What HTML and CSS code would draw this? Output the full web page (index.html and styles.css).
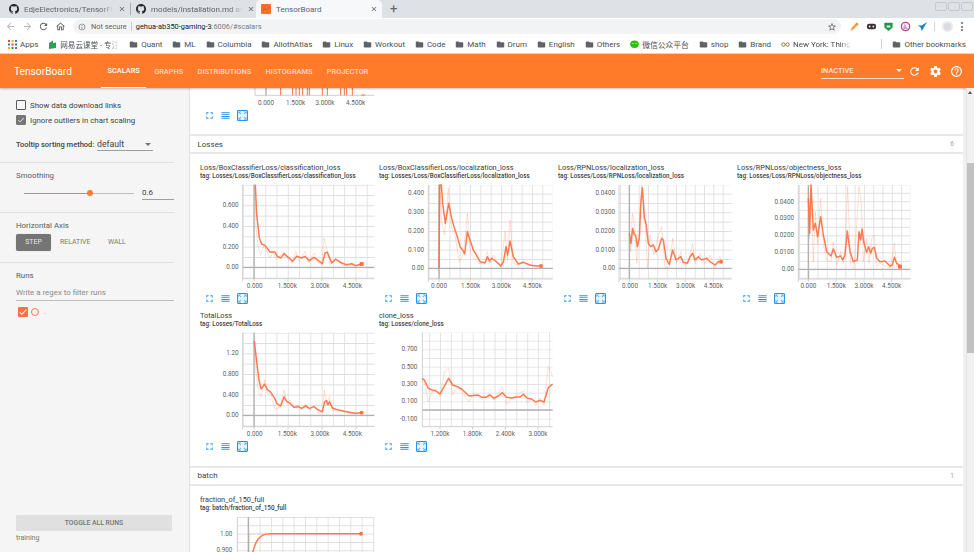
FILE: index.html
```html
<!DOCTYPE html>
<html lang="en">
<head>
  <title>TensorBoard</title>
  <link rel="stylesheet" href="styles.css">
</head>
<body>

<!-- icon sheet -->
<svg class="defs">
  <symbol id="i-github" viewBox="0 0 16 16"><path d="M8 0C3.58 0 0 3.58 0 8c0 3.54 2.29 6.53 5.47 7.59.4.07.55-.17.55-.38 0-.19-.01-.82-.01-1.49-2.01.37-2.53-.49-2.69-.94-.09-.23-.48-.94-.82-1.13-.28-.15-.68-.52-.01-.53.63-.01 1.08.58 1.23.82.72 1.21 1.87.87 2.33.66.07-.52.28-.87.51-1.07-1.78-.2-3.64-.89-3.64-3.95 0-.87.31-1.59.82-2.15-.08-.2-.36-1.02.08-2.12 0 0 .67-.21 2.2.82.64-.18 1.32-.27 2-.27.68 0 1.36.09 2 .27 1.53-1.04 2.2-.82 2.2-.82.44 1.1.16 1.92.08 2.12.51.56.82 1.27.82 2.15 0 3.07-1.87 3.75-3.65 3.95.29.25.54.73.54 1.48 0 1.07-.01 1.93-.01 2.2 0 .21.15.46.55.38A8.013 8.013 0 0016 8c0-4.42-3.58-8-8-8z"/></symbol>
  <symbol id="i-close" viewBox="0 0 24 24"><path d="M19 6.41L17.59 5 12 10.59 6.41 5 5 6.41 10.59 12 5 17.59 6.41 19 12 13.41 17.59 19 19 17.59 13.41 12z"/></symbol>
  <symbol id="i-folder" viewBox="0 0 24 24"><path d="M10 4H4c-1.1 0-2 .9-2 2v12c0 1.1.9 2 2 2h16c1.1 0 2-.9 2-2V8c0-1.1-.9-2-2-2h-8l-2-2z"/></symbol>
  <symbol id="i-full" viewBox="0 0 24 24"><path d="M7 14H5v5h5v-2H7v-3zm-2-4h2V7h3V5H5v5zm12 7h-3v2h5v-5h-2v3zM14 5v2h3v3h2V5h-5z"/></symbol>
  <symbol id="i-list" viewBox="0 0 24 24"><path d="M3 15h18v-2H3v2zm0 4h18v-2H3v2zm0-8h18V9H3v2zm0-6v2h18V5H3z"/></symbol>
  <symbol id="i-fit" viewBox="0 0 24 24"><path d="M15 3l2.3 2.3-2.89 2.87 1.42 1.42L18.7 6.7 21 9V3zM3 9l2.3-2.3 2.87 2.89 1.42-1.42L6.7 5.3 9 3H3zm6 12l-2.3-2.3 2.89-2.87-1.42-1.42L5.3 17.3 3 15v6zm12-6l-2.3 2.3-2.87-2.89-1.42 1.42 2.89 2.87L15 21h6z"/></symbol>
</svg>

<!-- browser window -->
<div class="tabstrip">
  <div class="tab">
    <svg class="tab-icon"><use href="#i-github"/></svg>
    <span class="tab-title">EdjeElectronics/TensorFl</span>
    <svg class="tab-close"><use href="#i-close"/></svg>
  </div>
  <div class="tab tab-split">
    <svg class="tab-icon"><use href="#i-github"/></svg>
    <span class="tab-title">models/installation.md at</span>
    <svg class="tab-close"><use href="#i-close"/></svg>
  </div>
  <div class="tab tab-active">
    <svg class="tab-icon" viewBox="0 0 10 10"><rect width="10" height="10" rx="1" fill="#ff6d2e"/><path d="M1.5 7L4 4.5 5.5 6 8.5 3" fill="none" stroke="#d9531e" stroke-width="1"/></svg>
    <span class="tab-title tab-title-full">TensorBoard</span>
    <svg class="tab-close"><use href="#i-close"/></svg>
  </div>
  <div class="new-tab">+</div>
  <div class="window-btns">
    <span class="window-btn"></span><span class="window-btn"></span><span class="window-btn"></span>
  </div>
</div>

<div class="toolbar">
  <svg class="nav-icon faint" viewBox="0 0 24 24"><path d="M20 11H7.83l5.59-5.59L12 4l-8 8 8 8 1.41-1.41L7.83 13H20v-2z"/></svg>
  <svg class="nav-icon faint" viewBox="0 0 24 24"><path d="M12 4l-1.41 1.41L16.17 11H4v2h12.17l-5.58 5.59L12 20l8-8z"/></svg>
  <svg class="nav-icon" viewBox="0 0 24 24"><path d="M17.65 6.35C16.2 4.9 14.21 4 12 4c-4.42 0-7.99 3.58-7.99 8s3.57 8 7.99 8c3.73 0 6.84-2.55 7.73-6h-2.08c-.82 2.33-3.04 4-5.65 4-3.31 0-6-2.69-6-6s2.69-6 6-6c1.66 0 3.14.69 4.22 1.78L13 11h7V4l-2.35 2.35z"/></svg>
  <svg class="nav-icon" viewBox="0 0 24 24"><path d="M12 5.69l5 4.5V18h-2v-6H9v6H7v-7.81l5-4.5M12 3L2 12h3v8h6v-6h2v6h6v-8h3L12 3z"/></svg>
  <div class="omnibox">
    <svg class="omni-info" viewBox="0 0 24 24"><path d="M11 7h2v2h-2zm0 4h2v6h-2zm1-9C6.48 2 2 6.48 2 12s4.48 10 10 10 10-4.48 10-10S17.52 2 12 2zm0 18c-4.41 0-8-3.59-8-8s3.59-8 8-8 8 3.59 8 8-3.59 8-8 8z"/></svg>
    <span class="not-secure">Not secure</span>
    <span class="omni-split"></span>
    <span class="url"><b>gehua-ab350-gaming-3</b>:6006/#scalars</span>
    <svg class="omni-star" viewBox="0 0 24 24"><path d="M22 9.24l-7.19-.62L12 2 9.19 8.63 2 9.24l5.46 4.73L5.82 21 12 17.27 18.18 21l-1.63-7.03L22 9.24zM12 15.4l-3.76 2.27 1-4.28-3.32-2.88 4.38-.38L12 6.1l1.71 4.04 4.38.38-3.32 2.88 1 4.28L12 15.4z"/></svg>
  </div>
  <div class="extensions">
    <svg class="ext" viewBox="0 0 12 12"><path d="M1.5 10.5L3 7l5-5 2 2-5 5z" fill="#f6a04d"/><path d="M8 2l2 2" stroke="#e8813a" stroke-width="1.4"/></svg>
    <svg class="ext" viewBox="0 0 12 12"><rect x="1" y="3" width="10" height="6" rx="2.5" fill="#3a2f35"/><circle cx="4" cy="6" r="1" fill="#eee"/><circle cx="8" cy="6" r="1" fill="#eee"/></svg>
    <svg class="ext" viewBox="0 0 12 12"><path d="M1.5 2h9v5L6 11 1.5 7z" fill="#1c9a4b"/><path d="M4 5h4v2H4z" fill="#fff"/></svg>
    <svg class="ext" viewBox="0 0 12 12"><circle cx="6" cy="6" r="4.5" fill="none" stroke="#b64a82" stroke-width="1.5"/><path d="M5 3l4 6H3z" fill="#c2a4d6"/></svg>
    <svg class="ext" viewBox="0 0 12 12"><path d="M11 1L5 5 1 5l3 2 1 4 2-3z" fill="#1f7fc4"/></svg>
    <span class="toolbar-split"></span>
    <span class="avatar"></span>
    <span class="dots"><i></i><i></i><i></i></span>
  </div>
</div>

<div class="bookmarks">
  <span class="mark mark-apps"><svg class="mark-icon" viewBox="0 0 9 9"><rect width="2" height="2" fill="#e8453c"/><rect x="3.5" width="2" height="2" fill="#f4b400"/><rect x="7" width="2" height="2" fill="#3b78e7"/><rect y="3.5" width="2" height="2" fill="#3b78e7"/><rect x="3.5" y="3.5" width="2" height="2" fill="#e8453c"/><rect x="7" y="3.5" width="2" height="2" fill="#0f9d58"/><rect y="7" width="2" height="2" fill="#f4b400"/><rect x="3.5" y="7" width="2" height="2" fill="#0f9d58"/><rect x="7" y="7" width="2" height="2" fill="#e8453c"/></svg>Apps</span>
  <span class="mark mark-fade mark-cjk"><svg class="mark-icon" viewBox="0 0 9 9"><path d="M1 3l4-2.5V3l3-.5V8L1 9z" fill="#2f9e58"/></svg>网易云课堂 - 专注</span>
  <span class="mark"><svg class="mark-icon folder"><use href="#i-folder"/></svg>Quant</span>
  <span class="mark"><svg class="mark-icon folder"><use href="#i-folder"/></svg>ML</span>
  <span class="mark"><svg class="mark-icon folder"><use href="#i-folder"/></svg>Columbia</span>
  <span class="mark"><svg class="mark-icon folder"><use href="#i-folder"/></svg>AliothAtlas</span>
  <span class="mark"><svg class="mark-icon folder"><use href="#i-folder"/></svg>Linux</span>
  <span class="mark"><svg class="mark-icon folder"><use href="#i-folder"/></svg>Workout</span>
  <span class="mark"><svg class="mark-icon folder"><use href="#i-folder"/></svg>Code</span>
  <span class="mark"><svg class="mark-icon folder"><use href="#i-folder"/></svg>Math</span>
  <span class="mark"><svg class="mark-icon folder"><use href="#i-folder"/></svg>Drum</span>
  <span class="mark"><svg class="mark-icon folder"><use href="#i-folder"/></svg>English</span>
  <span class="mark"><svg class="mark-icon folder"><use href="#i-folder"/></svg>Others</span>
  <span class="mark mark-cjk-wide"><svg class="mark-icon" viewBox="0 0 9 9"><ellipse cx="4.5" cy="4.2" rx="4.3" ry="3.7" fill="#2dc100"/><circle cx="3" cy="3.6" r=".6" fill="#fff"/><circle cx="6" cy="3.6" r=".6" fill="#fff"/></svg>微信公众平台</span>
  <span class="mark"><svg class="mark-icon folder"><use href="#i-folder"/></svg>shop</span>
  <span class="mark"><svg class="mark-icon folder"><use href="#i-folder"/></svg>Brand</span>
  <span class="mark mark-fade mark-nyt"><svg class="mark-icon" viewBox="0 0 9 9"><circle cx="2.4" cy="4.5" r="1.7" fill="none" stroke="#8a7a3c"/><circle cx="6.6" cy="4.5" r="1.7" fill="none" stroke="#8a7a3c"/></svg>New York: Thing</span>
  <span class="mark-split"></span>
  <span class="mark"><svg class="mark-icon folder"><use href="#i-folder"/></svg>Other bookmarks</span>
</div>

<!-- TensorBoard -->
<header class="topbar">
  <div class="brand">TensorBoard</div>
  <nav class="tb-nav">
    <a class="tb-link active">SCALARS</a>
    <a class="tb-link">GRAPHS</a>
    <a class="tb-link">DISTRIBUTIONS</a>
    <a class="tb-link">HISTOGRAMS</a>
    <a class="tb-link">PROJECTOR</a>
  </nav>
  <div class="tb-select"><span>INACTIVE</span><i class="caret"></i></div>
  <svg class="tb-icon" viewBox="0 0 24 24"><path d="M17.65 6.35C16.2 4.9 14.21 4 12 4c-4.42 0-7.99 3.58-7.99 8s3.57 8 7.99 8c3.73 0 6.84-2.55 7.73-6h-2.08c-.82 2.33-3.04 4-5.65 4-3.31 0-6-2.69-6-6s2.69-6 6-6c1.66 0 3.14.69 4.22 1.78L13 11h7V4l-2.35 2.35z"/></svg>
  <svg class="tb-icon" viewBox="0 0 24 24"><path d="M19.43 12.98c.04-.32.07-.64.07-.98s-.03-.66-.07-.98l2.11-1.65c.19-.15.24-.42.12-.64l-2-3.46c-.12-.22-.39-.3-.61-.22l-2.49 1c-.52-.4-1.08-.73-1.69-.98l-.38-2.65C14.46 2.18 14.25 2 14 2h-4c-.25 0-.46.18-.49.42l-.38 2.65c-.61.25-1.17.59-1.69.98l-2.49-1c-.23-.09-.49 0-.61.22l-2 3.46c-.13.22-.07.49.12.64l2.11 1.65c-.04.32-.07.65-.07.98s.03.66.07.98l-2.11 1.65c-.19.15-.24.42-.12.64l2 3.46c.12.22.39.3.61.22l2.49-1c.52.4 1.08.73 1.69.98l.38 2.65c.03.24.24.42.49.42h4c.25 0 .46-.18.49-.42l.38-2.65c.61-.25 1.17-.59 1.69-.98l2.49 1c.23.09.49 0 .61-.22l2-3.46c.12-.22.07-.49-.12-.64l-2.11-1.65zM12 15.5c-1.93 0-3.5-1.57-3.5-3.5s1.57-3.5 3.5-3.5 3.5 1.57 3.5 3.5-1.57 3.5-3.5 3.5z"/></svg>
  <svg class="tb-icon" viewBox="0 0 24 24"><path d="M11 18h2v-2h-2v2zm1-16C6.48 2 2 6.48 2 12s4.48 10 10 10 10-4.48 10-10S17.52 2 12 2zm0 18c-4.41 0-8-3.59-8-8s3.59-8 8-8 8 3.59 8 8-3.59 8-8 8zm0-14c-2.21 0-4 1.79-4 4h2c0-1.1.9-2 2-2s2 .9 2 2c0 2-3 1.75-3 5h2c0-2.25 3-2.5 3-5 0-2.21-1.79-4-4-4z"/></svg>
</header>

<div class="layout">
  <aside class="sidebar">
    <div class="side-block side-options">
      <label class="check-row"><span class="box"></span>Show data download links</label>
      <label class="check-row"><span class="box box-on"><svg viewBox="0 0 24 24"><path d="M9 16.2L4.8 12l-1.4 1.4L9 19 21 7l-1.4-1.4z"/></svg></span>Ignore outliers in chart scaling</label>
      <div class="tooltip-row">
        <span class="tooltip-label">Tooltip sorting method:</span>
        <span class="dropdown">default<i class="caret caret-grey"></i></span>
      </div>
    </div>
    <div class="side-block side-smoothing">
      <div class="side-title">Smoothing</div>
      <div class="slider-row">
        <div class="slider"><span class="slider-fill"></span><span class="slider-thumb"></span></div>
        <div class="slider-value">0.6</div>
      </div>
    </div>
    <div class="side-block side-axis">
      <div class="side-title">Horizontal Axis</div>
      <div class="axis-btns">
        <span class="axis-btn on">STEP</span>
        <span class="axis-btn">RELATIVE</span>
        <span class="axis-btn">WALL</span>
      </div>
    </div>
    <div class="side-block side-runs">
      <div class="side-title">Runs</div>
      <div class="regex">Write a regex to filter runs</div>
      <div class="run-row">
        <span class="run-check"><svg viewBox="0 0 24 24"><path d="M9 16.2L4.8 12l-1.4 1.4L9 19 21 7l-1.4-1.4z"/></svg></span>
        <span class="run-radio"></span>
        <span class="run-name">.</span>
      </div>
    </div>
    <div class="side-bottom">
      <div class="toggle-runs">TOGGLE ALL RUNS</div>
      <div class="log-dir">training</div>
    </div>
  </aside>

  <main class="content">
    <section class="cards cards-top">
      <div class="chart chart-clipped">
        <svg class="plot plot-clipped" viewBox="30 0 525 63">
          <path class="grid-edge" d="M195 0V22H553"/>
          <path class="zero" d="M228 0V22"/>
          <path class="spikes" d="M272 0V22M308 0V22M318 0V22M328 0V22M338 0V22M352 0V22M358 0V22M397 0V22M412 0V22M452 0V22M463 0V22M470 0V22M487 0V22"/>
          <path class="spikes" d="M514 21H525"/>
          <text class="tick" x="228" y="51">0.000</text><text class="tick" x="317" y="51">1.500k</text><text class="tick" x="405" y="51">3.000k</text><text class="tick" x="497" y="51">4.500k</text>
        </svg>
        <div class="chart-tools">
          <svg class="tool"><use href="#i-full"/></svg><svg class="tool"><use href="#i-list"/></svg><svg class="tool tool-on"><use href="#i-fit"/></svg>
        </div>
      </div>
    </section>

    <div class="tag-head"><span>Losses</span><span class="tag-count">6</span></div>
    <section class="cards">
      <div class="chart">
        <div class="chart-title">Loss/BoxClassifierLoss/classification_loss</div>
        <div class="chart-tag">tag: Losses/Loss/BoxClassifierLoss/classification_loss</div>
        <svg class="plot" viewBox="30 285 525 327">
          <defs><pattern id="g1" x="192" y="538" width="33.8" height="31" patternUnits="userSpaceOnUse"><path class="grid" d="M33.8 0H0V31"/></pattern></defs>
          <rect x="158" y="290" width="395" height="282" fill="url(#g1)"/>
          <path class="grid-edge" d="M158 290V572H553M158 572v9M192 572v9M294 572v9M396 572v9M498 572v9"/>
          <path class="zero" d="M192 290V572M158 538H553"/>
          <path class="raw" d="M196 290L198 420 205 480 212 500 222 470 240 510 250 490 258 515 270 505 280 490 295 515 305 525 318 490 328 520 345 490 355 525 372 495 385 525 395 530 402 450 410 480 420 530 437 510 455 530 470 533 490 525 500 535 515 525"/>
          <path class="smooth" d="M196 290L200 380 208 450 215 468 225 472 240 492 255 492 262 505 272 510 282 497 295 508 308 520 320 505 335 510 345 505 358 518 372 508 385 518 397 527 405 495 412 493 425 525 437 514 455 525 470 530 485 527 495 533 515 528"/>
          <rect class="end" x="509" y="522" width="12" height="12"/>
          <text class="tick end-a" x="146" y="358">0.600</text><text class="tick end-a" x="146" y="420">0.400</text><text class="tick end-a" x="146" y="482">0.200</text><text class="tick end-a" x="146" y="544">0.00</text>
          <text class="tick" x="194" y="600">0.000</text><text class="tick" x="292" y="600">1.500k</text><text class="tick" x="390" y="600">3.000k</text><text class="tick" x="487" y="600">4.500k</text>
        </svg>
        <div class="chart-tools">
          <svg class="tool"><use href="#i-full"/></svg><svg class="tool"><use href="#i-list"/></svg><svg class="tool tool-on"><use href="#i-fit"/></svg>
        </div>
      </div>

      <div class="chart">
        <div class="chart-title">Loss/BoxClassifierLoss/localization_loss</div>
        <div class="chart-tag">tag: Losses/Loss/BoxClassifierLoss/localization_loss</div>
        <svg class="plot" viewBox="27 84 525 327">
          <defs><pattern id="g2" x="207" y="340" width="31" height="28" patternUnits="userSpaceOnUse"><path class="grid" d="M31 0H0V28"/></pattern></defs>
          <rect x="175" y="90" width="373" height="282" fill="url(#g2)"/>
          <path class="grid-edge" d="M175 90V372H548M175 372v9M207 372v9M300 372v9M393 372v9M486 372v9"/>
          <path class="zero" d="M207 90V372M175 340H548"/>
          <path class="raw" d="M207 340L210 90 215 200 224 240 235 100 245 220 255 240 268 320 280 300 292 175 300 290 312 310 325 325 345 325 352 290 360 325 370 300 385 330 393 338 405 230 412 315 420 195 430 325 445 330 460 320 480 332 513 333"/>
          <path class="smooth" d="M207 340L209 90 214 90 218 145 226 205 236 145 245 190 252 215 262 245 270 275 278 285 284 297 292 230 300 255 310 285 320 302 330 320 345 323 352 305 358 318 365 310 372 315 385 325 392 333 400 322 408 275 413 300 420 258 430 305 445 327 460 322 480 330 500 333 513 333"/>
          <circle class="end" cx="513" cy="333" r="6"/>
          <text class="tick end-a" x="162" y="121">0.400</text><text class="tick end-a" x="162" y="178">0.300</text><text class="tick end-a" x="162" y="235">0.200</text><text class="tick end-a" x="162" y="291">0.100</text><text class="tick end-a" x="162" y="346">0.00</text>
          <text class="tick" x="207" y="400">0.000</text><text class="tick" x="302" y="400">1.500k</text><text class="tick" x="394" y="400">3.000k</text><text class="tick" x="487" y="400">4.500k</text>
        </svg>
        <div class="chart-tools">
          <svg class="tool"><use href="#i-full"/></svg><svg class="tool"><use href="#i-list"/></svg><svg class="tool tool-on"><use href="#i-fit"/></svg>
        </div>
      </div>

      <div class="chart">
        <div class="chart-title">Loss/RPNLoss/localization_loss</div>
        <div class="chart-tag">tag: Losses/Loss/RPNLoss/localization_loss</div>
        <svg class="plot" viewBox="24 84 525 327">
          <defs><pattern id="g3" x="238" y="340" width="28" height="28" patternUnits="userSpaceOnUse"><path class="grid" d="M28 0H0V28"/></pattern></defs>
          <rect x="207" y="90" width="338" height="282" fill="url(#g3)"/>
          <path class="grid-edge" d="M207 90V372H545M207 372v9M238 372v9M322 372v9M406 372v9M490 372v9"/>
          <path class="zero" d="M238 90V372M207 340H545"/>
          <path class="raw" d="M238 235L242 290 247 175 255 220 260 325 268 230 275 90 282 150 293 340 300 240 312 300 325 240 335 215 345 340 358 335 368 250 380 325 392 290 400 330 412 330 428 265 435 325 450 295 465 325 480 300 495 340 510 305 518 325"/>
          <path class="smooth" d="M238 235L243 265 248 220 253 240 257 240 262 275 268 250 272 150 277 98 283 190 288 205 295 265 302 275 310 270 318 290 325 283 335 250 340 255 348 310 358 328 368 285 378 315 392 305 400 322 412 325 420 305 428 295 435 315 445 305 455 315 470 310 480 320 495 330 505 320 518 320"/>
          <circle class="end" cx="513" cy="320" r="6"/>
          <text class="tick end-a" x="195" y="121">0.0400</text><text class="tick end-a" x="195" y="178">0.0300</text><text class="tick end-a" x="195" y="235">0.0200</text><text class="tick end-a" x="195" y="291">0.0100</text><text class="tick end-a" x="195" y="346">0.00</text>
          <text class="tick" x="240" y="400">0.000</text><text class="tick" x="323" y="400">1.500k</text><text class="tick" x="407" y="400">3.000k</text><text class="tick" x="490" y="400">4.500k</text>
        </svg>
        <div class="chart-tools">
          <svg class="tool"><use href="#i-full"/></svg><svg class="tool"><use href="#i-list"/></svg><svg class="tool tool-on"><use href="#i-fit"/></svg>
        </div>
      </div>

      <div class="chart">
        <div class="chart-title">Loss/RPNLoss/objectness_loss</div>
        <div class="chart-tag">tag: Losses/Loss/RPNLoss/objectness_loss</div>
        <svg class="plot" viewBox="21 84 525 327">
          <defs><pattern id="g4" x="235" y="343" width="27.8" height="25.5" patternUnits="userSpaceOnUse"><path class="grid" d="M27.8 0H0V25.5"/></pattern></defs>
          <rect x="205" y="90" width="336" height="282" fill="url(#g4)"/>
          <path class="grid-edge" d="M205 90V372H541M205 372v9M235 372v9M318 372v9M402 372v9M485 372v9"/>
          <path class="zero" d="M235 90V372M205 343H541"/>
          <path class="raw" d="M235 100L238 250 243 90 250 320 256 170 263 270 272 130 280 270 290 315 303 320 310 260 320 330 332 290 340 325 345 285 353 95 362 330 372 340 387 95 394 145 400 320 410 250 417 325 425 250 433 240 440 335 450 325 470 335 482 338 493 265 500 335 515 330"/>
          <path class="smooth" d="M235 130L239 235 243 90 250 225 256 205 263 245 272 185 280 240 290 290 303 303 310 282 320 307 332 303 338 315 345 300 352 228 360 290 370 320 382 315 387 230 392 255 396 222 402 265 410 292 416 275 422 295 427 280 433 277 440 310 450 320 465 318 480 333 487 330 493 307 500 325 515 335"/>
          <rect class="end" x="504" y="329" width="12" height="12"/>
          <text class="tick end-a" x="192" y="146">0.0400</text><text class="tick end-a" x="192" y="196">0.0300</text><text class="tick end-a" x="192" y="247">0.0200</text><text class="tick end-a" x="192" y="298">0.0100</text><text class="tick end-a" x="192" y="349">0.00</text>
          <text class="tick" x="235" y="400">0.000</text><text class="tick" x="319" y="400">1.500k</text><text class="tick" x="402" y="400">3.000k</text><text class="tick" x="485" y="400">4.500k</text>
        </svg>
        <div class="chart-tools">
          <svg class="tool"><use href="#i-full"/></svg><svg class="tool"><use href="#i-list"/></svg><svg class="tool tool-on"><use href="#i-fit"/></svg>
        </div>
      </div>

      <div class="chart">
        <div class="chart-title">TotalLoss</div>
        <div class="chart-tag">tag: Losses/TotalLoss</div>
        <svg class="plot" viewBox="30 78 525 327">
          <defs><pattern id="g5" x="192" y="331" width="33.8" height="31" patternUnits="userSpaceOnUse"><path class="grid" d="M33.8 0H0V31"/></pattern></defs>
          <rect x="158" y="83" width="395" height="282" fill="url(#g5)"/>
          <path class="grid-edge" d="M158 83V365H553M158 365v9M192 365v9M294 365v9M396 365v9M498 365v9"/>
          <path class="zero" d="M192 83V365M158 331H553"/>
          <path class="raw" d="M193 108L198 200 205 260 213 275 224 225 232 265 243 270 256 315 270 305 282 255 292 295 300 285 312 310 325 300 335 315 347 298 360 315 372 300 385 325 397 322 403 255 410 300 418 275 428 318 445 312 470 322 495 327 515 320"/>
          <path class="smooth" d="M193 108L200 170 206 220 213 252 224 238 232 253 243 263 254 280 260 295 272 303 282 275 290 290 298 293 312 307 325 305 335 310 347 303 358 310 372 305 385 315 397 320 404 290 410 287 414 300 418 290 428 310 445 315 470 320 495 325 515 323"/>
          <circle class="end" cx="515" cy="323" r="6"/>
          <text class="tick end-a" x="146" y="151">1.20</text><text class="tick end-a" x="146" y="213">0.800</text><text class="tick end-a" x="146" y="275">0.400</text><text class="tick end-a" x="146" y="337">0.00</text>
          <text class="tick" x="194" y="393">0.000</text><text class="tick" x="292" y="393">1.500k</text><text class="tick" x="390" y="393">3.000k</text><text class="tick" x="487" y="393">4.500k</text>
        </svg>
        <div class="chart-tools">
          <svg class="tool"><use href="#i-full"/></svg><svg class="tool"><use href="#i-list"/></svg><svg class="tool tool-on"><use href="#i-fit"/></svg>
        </div>
      </div>

      <div class="chart">
        <div class="chart-title">clone_loss</div>
        <div class="chart-tag">tag: Losses/clone_loss</div>
        <svg class="plot" viewBox="27 78 525 327">
          <defs><pattern id="g6" x="210" y="341" width="32.7" height="26" patternUnits="userSpaceOnUse"><path class="grid" d="M32.7 0H0V26"/></pattern></defs>
          <rect x="157" y="83" width="391" height="282" fill="url(#g6)"/>
          <path class="grid-edge" d="M157 83V365H548M210 365v9M308 365v9M406 365v9M504 365v9"/>
          <path class="zero" d="M157 315H548"/>
          <path class="raw" d="M157 220L165 240 175 290 187 260 198 250 210 275 224 200 236 190 248 270 262 245 275 260 297 290 312 265 335 285 360 265 372 285 397 245 410 298 425 280 460 258 472 295 485 280 497 303 510 280 522 300 535 185 548 215"/>
          <path class="smooth" d="M157 220L163 225 175 250 187 255 198 258 210 267 236 220 248 240 262 245 275 252 297 273 325 270 335 277 347 277 360 270 372 280 385 273 397 263 410 277 425 279 440 276 450 276 460 268 472 280 485 282 497 291 510 286 522 291 535 248 548 237"/>
          <text class="tick end-a" x="142" y="139">0.700</text><text class="tick end-a" x="142" y="191">0.500</text><text class="tick end-a" x="142" y="243">0.300</text><text class="tick end-a" x="142" y="295">0.100</text><text class="tick end-a" x="142" y="347">-0.100</text>
          <text class="tick" x="210" y="393">1.200k</text><text class="tick" x="307" y="393">1.800k</text><text class="tick" x="406" y="393">2.400k</text><text class="tick" x="504" y="393">3.000k</text>
        </svg>
        <div class="chart-tools">
          <svg class="tool"><use href="#i-full"/></svg><svg class="tool"><use href="#i-list"/></svg><svg class="tool tool-on"><use href="#i-fit"/></svg>
        </div>
      </div>
    </section>

    <div class="tag-head"><span>batch</span><span class="tag-count">1</span></div>
    <section class="cards">
      <div class="chart">
        <div class="chart-title">fraction_of_150_full</div>
        <div class="chart-tag">tag: batch/fraction_of_150_full</div>
        <svg class="plot" viewBox="30 162 525 327">
          <defs><pattern id="g7" x="175" y="218" width="34" height="25" patternUnits="userSpaceOnUse"><path class="grid" d="M34 0H0V25"/></pattern></defs>
          <rect x="142" y="168" width="411" height="282" fill="url(#g7)"/>
          <path class="grid-edge" d="M142 168V450H553"/>
          <path class="zero" d="M175 168V450"/>
          <path class="raw" d="M178 300V218H513"/>
          <path class="smooth" d="M188 276C195 245 205 218 240 218H513"/>
          <circle class="end" cx="513" cy="218" r="6"/>
          <text class="tick end-a" x="127" y="224">1.00</text><text class="tick end-a" x="127" y="272">0.900</text>
        </svg>
      </div>
    </section>
  </main>

  <div class="scrollbar">
    <i class="scroll-arrow"></i>
    <span class="scroll-thumb"></span>
  </div>
</div>

</body>
</html>
```

FILE: styles.css
```css
* {
  box-sizing: border-box;
}

html, body {
  height: 552px;
  margin: 0;
  overflow: hidden;
}

body {
  font-family: Roboto, "Noto Sans CJK SC", sans-serif;
  color: #3c4043;
  background: #fff;
}

.defs {
  display: none;
}

/* browser tabs */
.tabstrip {
  display: flex;
  align-items: stretch;
  height: 18px;
  padding-left: 4px;
  background: #dee1e6;
}

.tab {
  width: 126px;
  display: flex;
  align-items: center;
  padding: 0 4px 0 5px;
  font-size: 8px;
  color: #5f6368;
}

.tab-split {
  border-left: 1px solid #a9adb3;
  margin: 3px 0;
}

.tab-active {
  background: #f7f8f9;
  border-radius: 5px 5px 0 0;
}

.tab-icon {
  width: 10px;
  height: 10px;
  flex: none;
  margin-right: 5px;
  fill: #24292e;
}

.tab-title {
  flex: 1;
  white-space: nowrap;
  -webkit-mask-image: linear-gradient(90deg, #000 85%, transparent);
  mask-image: linear-gradient(90deg, #000 85%, transparent);
}

.tab-title-full {
  -webkit-mask-image: none;
  mask-image: none;
}

.tab-close {
  width: 8px;
  height: 8px;
  flex: none;
  margin-left: 4px;
  fill: #5f6368;
}

.new-tab {
  margin-left: 8px;
  font-size: 13px;
  line-height: 18px;
  color: #5f6368;
}

.window-btns {
  margin-left: auto;
  display: flex;
  gap: 1px;
  padding: 2px 1px 0 0;
}

.window-btn {
  width: 12px;
  height: 9px;
  border: 1px solid #c6c8cb;
  border-radius: 2px;
}

/* browser toolbar */
.toolbar {
  display: flex;
  align-items: center;
  height: 17px;
  padding-left: 5px;
  background: #fff;
}

.nav-icon {
  width: 11px;
  height: 11px;
  margin-right: 5.5px;
  fill: #5f6368;
}

.nav-icon.faint {
  fill: #b5b8bc;
}

.omnibox {
  width: 768px;
  height: 15px;
  margin-left: 2px;
  display: flex;
  align-items: center;
  padding: 0 4px 0 5px;
  border-radius: 8px;
  background: #f1f3f4;
  font-size: 7.4px;
  white-space: nowrap;
}

.omni-info {
  width: 8px;
  height: 8px;
  fill: #5f6368;
  margin-right: 5px;
}

.not-secure {
  color: #5f6368;
}

.omni-split {
  width: 1px;
  height: 9px;
  margin: 0 4px;
  background: #c4c7ca;
}

.url {
  color: #777b80;
}

.url b {
  font-weight: 400;
  color: #202124;
}

.omni-star {
  width: 10px;
  height: 10px;
  margin-left: auto;
  fill: #5f6368;
}

.extensions {
  display: flex;
  align-items: center;
  margin-left: 7.5px;
  gap: 6px;
}

.ext {
  width: 11px;
  height: 11px;
}

.toolbar-split {
  width: 1px;
  height: 9px;
  background: #d5d7da;
}

.avatar {
  width: 11px;
  height: 11px;
  margin-left: 1px;
  border-radius: 50%;
  background: #dadce0;
  border: 2px solid #e8eaed;
}

.dots {
  display: flex;
  flex-direction: column;
  gap: 1.5px;
  margin-left: 2px;
}

.dots i {
  width: 2px;
  height: 2px;
  border-radius: 50%;
  background: #5f6368;
}

/* bookmarks */
.bookmarks {
  display: flex;
  align-items: center;
  height: 19px;
  padding-left: 8px;
  gap: 9.9px;
  background: #fff;
  font-size: 8px;
  white-space: nowrap;
  color: #4a4d51;
  border-bottom: 1px solid #dadce0;
}

.mark {
  display: flex;
  align-items: center;
  gap: 3px;
}

.mark-icon {
  width: 9px;
  height: 9px;
  flex: none;
}

.folder {
  fill: #5f6368;
}

.mark-fade {
  -webkit-mask-image: linear-gradient(90deg, #000 85%, transparent);
  mask-image: linear-gradient(90deg, #000 85%, transparent);
}

.mark-cjk {
  font-size: 7.6px;
}

.mark-cjk-wide {
  font-size: 7.8px;
}

.mark-split {
  width: 1px;
  height: 10px;
  margin: 0 1px 0 20px;
  background: #cfd1d4;
}

/* tensorboard top bar */
.topbar {
  display: flex;
  align-items: center;
  height: 34px;
  padding-left: 14px;
  background: #ff7b29;
  color: #fff;
  box-shadow: 0 1px 2px rgba(0, 0, 0, 0.25);
  position: relative;
}

.brand {
  width: 87px;
  font-size: 10.2px;
}

.tb-nav {
  display: flex;
  gap: 1.4px;
  height: 100%;
}

.tb-link {
  display: flex;
  align-items: center;
  padding: 0 6.5px;
  font-size: 7.4px;
  font-weight: 500;
  color: rgba(255, 255, 255, 0.72);
}

.tb-link.active {
  color: #fff;
  border-bottom: 1px solid #fff;
}

.tb-select {
  margin-left: auto;
  width: 83px;
  height: 16px;
  display: flex;
  align-items: center;
  justify-content: space-between;
  padding-right: 2px;
  font-size: 7.4px;
  font-weight: 500;
  color: rgba(255, 255, 255, 0.8);
  border-bottom: 1px solid rgba(255, 255, 255, 0.75);
}

.caret {
  width: 0;
  height: 0;
  border: 3px solid transparent;
  border-top-color: #fff;
  border-bottom: 0;
}

.caret-grey {
  border-top-color: #757575;
  margin-left: auto;
  margin-right: 2px;
}

.tb-icon {
  width: 13px;
  height: 13px;
  margin-left: 8px;
  fill: #fff;
}

.tb-select + .tb-icon {
  margin-left: 4px;
}

.tb-icon:last-child {
  margin-right: 11px;
}

/* page below the top bar */
.layout {
  display: flex;
  height: 464px;
}

.sidebar {
  width: 190px;
  flex: none;
  display: flex;
  flex-direction: column;
  background: #f5f5f5;
  border-right: 1px solid #e3e3e3;
  font-size: 7.85px;
  color: #424242;
}

.side-block {
  width: 174px;
  padding-left: 16px;
  border-bottom: 1px solid #e0e0e0;
}

.side-options {
  height: 75px;
  padding-top: 12px;
}

.side-smoothing {
  height: 50px;
  padding-top: 7px;
}

.side-axis {
  height: 50px;
  padding-top: 7px;
}

.side-runs {
  border-bottom: 0;
  padding-top: 7px;
}

.check-row {
  display: flex;
  align-items: center;
  height: 10px;
  margin-bottom: 5px;
}

.box {
  width: 10px;
  height: 10px;
  margin-right: 4px;
  border: 1px solid #5a5a5a;
  border-radius: 1px;
}

.box-on {
  background: #757575;
  border-color: #757575;
}

.box svg, .run-check svg {
  display: block;
  fill: #fff;
}

.tooltip-row {
  display: flex;
  align-items: center;
  margin-top: 13px;
}

.tooltip-label {
  width: 81px;
  font-size: 7.5px;
  font-weight: 500;
  white-space: nowrap;
}

.dropdown {
  width: 56px;
  height: 13px;
  display: flex;
  align-items: center;
  border-bottom: 1px solid #9e9e9e;
  font-size: 8.7px;
}

.side-title {
  line-height: 11px;
  color: #5a5a5a;
}

.slider-row {
  display: flex;
  align-items: center;
  margin-top: 3px;
  height: 18px;
}

.slider {
  width: 110px;
  height: 1px;
  margin-left: 8px;
  position: relative;
  background: #bdbdbd;
}

.slider-fill {
  display: block;
  width: 60%;
  height: 100%;
  background: #ff7b29;
}

.slider-thumb {
  position: absolute;
  left: 60%;
  top: -2.5px;
  width: 6px;
  height: 6px;
  margin-left: -3px;
  border-radius: 50%;
  background: #ff7b29;
}

.slider-value {
  width: 32px;
  margin-left: 8px;
  height: 14px;
  line-height: 13px;
  font-size: 8px;
  border-bottom: 1px solid #9e9e9e;
}

.axis-btns {
  display: flex;
  align-items: center;
  margin-top: 3px;
}

.axis-btn {
  height: 17px;
  line-height: 17px;
  width: 35px;
  margin-right: 6.7px;
  text-align: center;
  font-size: 6.9px;
  color: #777;
}

.axis-btn.on {
  background: #757575;
  color: #e8e8e8;
  border-radius: 2px;
  box-shadow: 0 0 1px rgba(0, 0, 0, 0.3);
}

.regex {
  margin-top: 5px;
  height: 15px;
  line-height: 14px;
  font-size: 7.9px;
  color: #8a8a8a;
  border-bottom: 1px solid #bdbdbd;
}

.run-row {
  display: flex;
  align-items: center;
  margin: 6px 0 0 2px;
}

.run-check {
  width: 10px;
  height: 10px;
  background: #ff7043;
  border-radius: 1px;
}

.run-radio {
  width: 8px;
  height: 8px;
  margin-left: 3px;
  border: 1px solid #ff7043;
  border-radius: 50%;
}

.run-name {
  margin-left: 5px;
  font-size: 7px;
  color: #777;
}

.side-bottom {
  margin-top: auto;
  padding: 0 17px 8px 16px;
}

.toggle-runs {
  height: 16px;
  line-height: 16px;
  text-align: center;
  font-size: 6.8px;
  font-weight: 500;
  color: #757575;
  background: #e0e0e0;
  border-radius: 1px;
}

.log-dir {
  margin-top: 2px;
  line-height: 11px;
  font-size: 7px;
  color: #777;
}

/* scalar charts */
.content {
  flex: 1;
  min-width: 0;
  overflow: hidden;
  background: #fff;
  border-right: 3px solid #f0f0f0;
}

.cards {
  display: grid;
  grid-template-columns: repeat(4, 179px);
  padding: 10px 0 5.5px 10px;
}

.cards-top {
  height: 46px;
  padding: 0 0 0 10px;
}

.tag-head {
  height: 20px;
  display: flex;
  align-items: center;
  justify-content: space-between;
  padding: 0 9px 0 7.5px;
  border-top: 2px solid #e8e8e8;
  border-bottom: 2px solid #e8e8e8;
  font-size: 8px;
  color: #424242;
}

.tag-count {
  font-size: 6.5px;
  color: #9e9e9e;
}

.chart {
  height: 148px;
}

.chart-clipped {
  height: 46px;
}

.chart-title {
  height: 8px;
  line-height: 8px;
  font-size: 7.35px;
  color: #3a3a3a;
  white-space: nowrap;
}

.chart-tag {
  height: 8px;
  line-height: 9px;
  font-size: 6.3px;
  font-weight: 500;
  color: #424242;
  white-space: nowrap;
}

.plot {
  display: block;
  width: 175px;
  height: 109px;
  margin-top: 3px;
}

.plot-clipped {
  height: 21px;
  margin-top: 0;
}

.grid {
  fill: none;
  stroke: #dedede;
  stroke-width: 5;
}

.grid-edge {
  fill: none;
  stroke: #d0d0d0;
  stroke-width: 3;
}

.zero {
  fill: none;
  stroke: #b0b0b0;
  stroke-width: 4;
}

.raw {
  fill: none;
  stroke: #ff7043;
  stroke-width: 3;
  opacity: 0.22;
}

.smooth {
  fill: none;
  stroke: #ff7043;
  stroke-width: 4.5;
  stroke-linejoin: round;
  opacity: 0.92;
}

.end {
  fill: #ff7043;
}

.spikes {
  fill: none;
  stroke: #ff7043;
  stroke-width: 3;
}

.tick {
  font-size: 19px;
  fill: #5f5f5f;
  text-anchor: middle;
}

.tick.end-a {
  text-anchor: end;
}

.chart-tools {
  display: flex;
  align-items: center;
  gap: 5.5px;
  height: 11px;
  margin-top: 1px;
  padding-left: 3.5px;
}

.tool {
  width: 11px;
  height: 11px;
  fill: #2196f3;
}

.tool-on {
  background: #e8f4fe;
  fill: #64b5f6;
  outline: 1px solid #2196f3;
  outline-offset: -1px;
  border-radius: 1px;
}

.scrollbar {
  width: 8px;
  flex: none;
  position: relative;
  background: #f1f1f1;
  border-left: 1px solid #e4e4e4;
}

.scroll-arrow {
  position: absolute;
  left: 1px;
  top: 3px;
  border: 2px solid transparent;
  border-bottom: 3px solid #505050;
  border-top: 0;
}

.scroll-thumb {
  position: absolute;
  left: 0;
  right: 0;
  top: 75px;
  height: 190px;
  background: #c1c1c1;
}
```
